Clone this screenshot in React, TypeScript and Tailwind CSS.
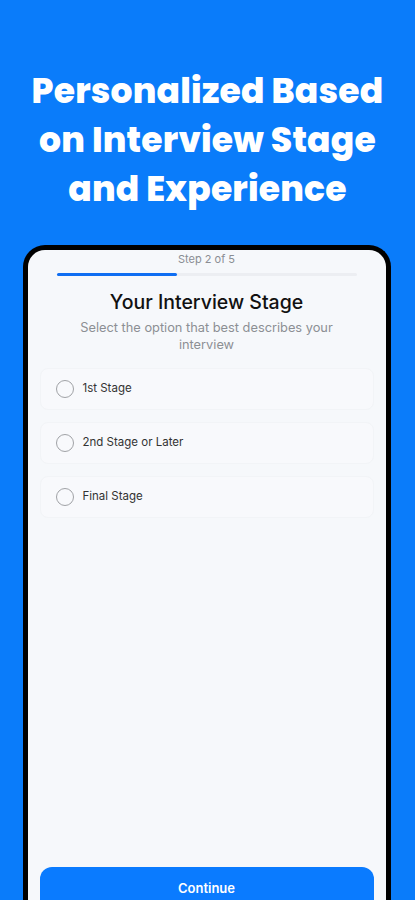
export default function App() {
  const options = ["1st Stage", "2nd Stage or Later", "Final Stage"];
  return (
    <div className="w-[415px] h-[900px] overflow-hidden bg-[#0a7cfa] flex flex-col items-center">
      <h1
        className="mt-[67px] text-white text-center font-extrabold text-[34.5px] leading-[49px] tracking-[0.2px]"
        style={{ fontFamily: '"Poppins", "Open Sans", sans-serif' }}
      >
        Personalized Based
        <br />
        on Interview Stage
        <br />
        and Experience
      </h1>
      <div className="mt-[31px] w-[368px] ml-[-2px] flex-1 rounded-t-[22px] border-[5px] border-b-0 border-black bg-[#f6f8fb] flex flex-col" style={{ fontFamily: 'Inter, "Liberation Sans", sans-serif' }}>
        <div className="text-center text-[11px] leading-[14px] text-[#8a8d93] mt-[2px]">Step 2 of 5</div>
        <div className="mx-[29px] mt-[7px] h-[3px] rounded-full bg-[#eceef2] flex">
          <div className="w-[120px] h-full rounded-full bg-[#0f6ef2]" />
        </div>
        <div className="mt-[13px] text-center text-[19.5px] leading-[26px] font-medium text-[#111]">Your Interview Stage</div>
        <div className="mt-[4px] mx-[36px] text-center text-[12.8px] leading-[17px] text-[#8c8f94]">
          Select the option that best describes your interview
        </div>
        <div className="mt-[15px] mx-[12px] flex flex-col gap-[12px]">
          {options.map((o) => (
            <div key={o} className="h-[42px] rounded-[8px] bg-[#f8f9fc] border border-[#f2f4f7] flex items-center px-[15px] gap-[9px]">
              <div className="w-[18px] h-[18px] rounded-full border-[1.5px] border-[#a0a2a6]" />
              <span className="text-[11.5px] text-[#333]">{o}</span>
            </div>
          ))}
        </div>
        <div className="flex-1" />
        <div className="mx-[12px] h-[33px] rounded-t-[12px] bg-[#0a7bff] flex justify-center pt-[13px]">
          <span className="text-white text-[13px] leading-[16px] font-semibold">Continue</span>
        </div>
      </div>
    </div>
  );
}
